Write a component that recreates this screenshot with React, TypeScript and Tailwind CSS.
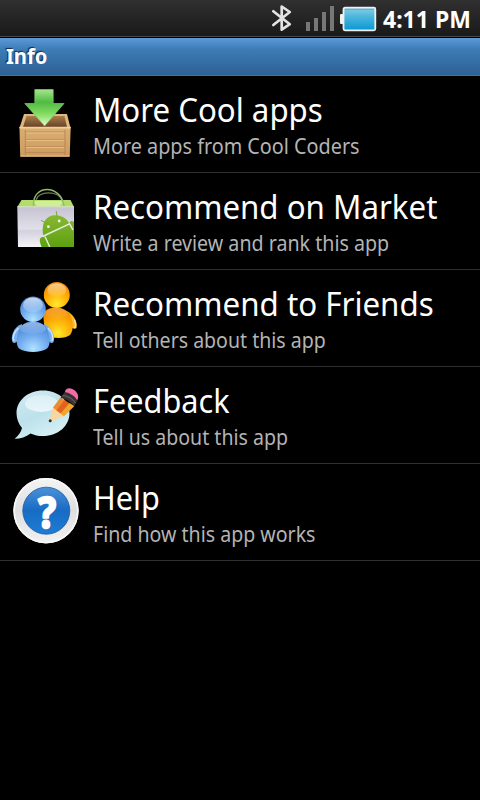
import { ReactNode } from "react";
import clsx from "clsx";

interface InfoItem {
  title: string;
  subtitle: string;
  icon: ReactNode;
  titleScale: string;
  subtitleScale: string;
}

const iconProps = {
  className: "h-24 w-20 shrink-0",
  viewBox: "0 0 80 96",
  fill: "none",
};

function AppsIcon() {
  return (
    <svg {...iconProps}>
      <defs>
        <linearGradient id="crate" x1="0" y1="0" x2="0" y2="1">
          <stop offset="0" stopColor="#dcae72" />
          <stop offset="1" stopColor="#cc9a60" />
        </linearGradient>
        <linearGradient id="inside" x1="0" y1="0" x2="0" y2="1">
          <stop offset="0" stopColor="#a87d4b" />
          <stop offset="1" stopColor="#684323" />
        </linearGradient>
        <linearGradient id="arrow" x1="0" y1="0" x2="0" y2="1">
          <stop offset="0" stopColor="#a5e68f" />
          <stop offset="0.35" stopColor="#4fbb40" />
          <stop offset="0.7" stopColor="#8bdf68" />
          <stop offset="1" stopColor="#e8fccf" />
        </linearGradient>
      </defs>
      <path d="M24 38H67L70.5 52H19.5Z" fill="#deb67e" />
      <path d="M26.5 40H64.5L67 51H23Z" fill="url(#inside)" />
      <path d="M19.5 51H70.7L69.7 80.7H20.2Z" fill="url(#crate)" />
      <path d="M19.5 51.6H70.7" stroke="#f0cf99" strokeWidth="1.6" />
      <path d="M25 56H65M25 63.5H65M25 70.5H65M25 76.5H65" stroke="#b07d49" strokeWidth="0.6" />
      <path d="M25.5 57H64.5M25.5 64.4H64.5M25.5 71.4H64.5" stroke="#e9c48b" strokeWidth="0.9" />
      <path d="M25.3 54V80M65 54V80" stroke="#b07d49" strokeWidth="0.7" />
      <path d="M20.5 80H69.5" stroke="#e7c18b" strokeWidth="1" />
      <path
        d="M34.8 13.5H53.2V27.5H64L44.6 50L24.8 27.5H34.8Z"
        fill="url(#arrow)"
        stroke="#7bcf63"
        strokeWidth="0.7"
      />
    </svg>
  );
}

function MarketIcon() {
  return (
    <svg {...iconProps}>
      <defs>
        <linearGradient id="bag" x1="0" y1="0" x2="0" y2="1">
          <stop offset="0" stopColor="#c5c3d2" />
          <stop offset="0.55" stopColor="#e1dfe9" />
          <stop offset="0.6" stopColor="#d3d1dd" />
          <stop offset="1" stopColor="#f5f4f9" />
        </linearGradient>
        <linearGradient id="droid" x1="0" y1="0" x2="0" y2="1">
          <stop offset="0" stopColor="#87b832" />
          <stop offset="1" stopColor="#5ca010" />
        </linearGradient>
        <clipPath id="bagClip">
          <path d="M17.3 33.5H74V74H18Z" />
        </clipPath>
      </defs>
      <path d="M21.5 27H70.5L74 34H17.3Z" fill="#b4dc6c" />
      <path d="M33 28H64L60 33H37Z" fill="#d1ee97" />
      <path d="M17.3 33.5H74V74H18Z" fill="url(#bag)" />
      <path d="M17.3 33.8H74" stroke="#dde9c6" strokeWidth="0.8" />
      <path d="M36 27C38 18 58 17 62 27" stroke="#698250" strokeWidth="1.2" />
      <path d="M33.5 33C32 11 61 11 64 33" stroke="#96b66c" strokeWidth="1.4" />
      <g clipPath="url(#bagClip)">
        <path
          d="M43.2 62.5C41 50 46 43.8 52.5 42.6C60 41.5 66 44.5 69 50L70.5 48.5C72 47.5 73.5 48.5 75 50V75H42C40 70 39 66.5 40.5 65C41.5 63.8 43 63.8 44.5 64.5Z"
          fill="url(#droid)"
        />
        <path d="M43 63.2L70 50.6" stroke="#e6eedb" strokeWidth="1.6" />
        <path d="M45 63.5L50.2 75M69.3 50.3L73 57" stroke="#e6eedb" strokeWidth="1.4" />
        <path
          d="M41.5 47.5L46 50M56.3 38.5L57 43.5"
          stroke="#78aa2c"
          strokeWidth="1"
          strokeLinecap="round"
        />
      </g>
      <circle cx="48.4" cy="53.7" r="1.4" fill="#eef5e2" />
      <circle cx="59.2" cy="48" r="1.4" fill="#eef5e2" />
    </svg>
  );
}

function FriendsIcon() {
  return (
    <svg {...iconProps}>
      <defs>
        <radialGradient id="orange" cx="0.5" cy="0.85" r="0.85">
          <stop offset="0" stopColor="#ffe92e" />
          <stop offset="0.45" stopColor="#ffb60a" />
          <stop offset="1" stopColor="#f08300" />
        </radialGradient>
        <radialGradient id="blue" cx="0.5" cy="0.9" r="0.85">
          <stop offset="0" stopColor="#b0e3ff" />
          <stop offset="0.5" stopColor="#73adf0" />
          <stop offset="1" stopColor="#4784d5" />
        </radialGradient>
        <linearGradient id="gloss" x1="0" y1="0" x2="0" y2="1">
          <stop offset="0" stopColor="#fff" stopOpacity="0.7" />
          <stop offset="1" stopColor="#fff" stopOpacity="0.1" />
        </linearGradient>
      </defs>
      <path d="M66 41C73 43 78 52 76.5 58C75 60 71 58 69 55Z" fill="#ffb62d" />
      <path d="M74.5 50C76 54 76 57 74 58" stroke="#ffe6a6" strokeWidth="1.3" />
      <path
        d="M43 43C48 35.5 63 35.5 69 43C73.5 50 74 60 70 65C65 69 50 69 45 64Z"
        fill="url(#orange)"
      />
      <path d="M45 43C50 36 63 36 68 43C66 50 49 51 45 43Z" fill="url(#gloss)" opacity="0.3" />
      <circle cx="56.8" cy="25" r="13" fill="url(#orange)" />
      <ellipse cx="56.8" cy="20" rx="9.5" ry="6.8" fill="url(#gloss)" opacity="0.8" />
      <path d="M22 54C14 56 10 67 12.5 72C15 75 19 70 22 65Z" fill="#79afea" />
      <path d="M44 54C51 56 56 67 53.5 72C51 75 47 70 44 65Z" fill="#79afea" />
      <path
        d="M18.5 58C14 62 12.5 67 14 71M48 58C52 62 53.5 67 52 71"
        stroke="#c4e4ff"
        strokeWidth="1.5"
      />
      <path
        d="M20.5 57C25 49.5 41 49.5 46 57C50.5 65 51 75 47 78.5C41 83 25 83 19 78.5C15.5 75 16 65 20.5 57Z"
        fill="url(#blue)"
      />
      <path d="M20 58C25 50 41 50 46 58C48 65 18 66 20 58Z" fill="url(#gloss)" opacity="0.6" />
      <circle cx="33" cy="39.3" r="12.8" fill="url(#blue)" />
      <ellipse cx="33" cy="35" rx="10" ry="7.5" fill="url(#gloss)" />
    </svg>
  );
}

function FeedbackIcon() {
  return (
    <svg {...iconProps}>
      <defs>
        <linearGradient id="bubble" x1="0.2" y1="0" x2="0.7" y2="1">
          <stop offset="0" stopColor="#cfeaf1" />
          <stop offset="0.5" stopColor="#bde1eb" />
          <stop offset="1" stopColor="#d9f1f5" />
        </linearGradient>
        <linearGradient id="shine" x1="0" y1="0" x2="0" y2="1">
          <stop offset="0" stopColor="#d9eff5" />
          <stop offset="1" stopColor="#eaf6fa" />
        </linearGradient>
      </defs>
      <path
        d="M43 23.5C58 23.5 69.5 33.5 69.5 46C69.5 59 58 69 43 69C38.5 69 34 68 30.5 66.4C26 70 20 71.8 14.7 71.7C18.5 68.5 21 65 22 61C18.5 57 16.5 51.5 16.5 46C16.5 33.5 28 23.5 43 23.5Z"
        fill="url(#bubble)"
      />
      <ellipse cx="41.5" cy="36.5" rx="16.5" ry="8.5" fill="url(#shine)" />
      <path d="M49 55L53 40L64 49Z" fill="#f9d5a0" />
      <circle cx="50.2" cy="53.8" r="1.5" fill="#28322f" />
      <path d="M53 40.5L60.5 30.5L65 33.5L57 43.8Z" fill="#ee8a2f" />
      <path d="M56.5 43.5L64.5 33L70 36.5L61 46.8Z" fill="#e2621f" />
      <path d="M60.5 46.8L69.5 36L74.5 39L64 49.2Z" fill="#f0a42a" />
      <path d="M60.5 31L65.5 24C70 24 76 28 77.5 33L74 39.5C71 35 65.5 31.5 60.5 31Z" fill="#383334" />
      <path d="M62.5 28.5C68 29 73 32 75.5 36.2" stroke="#78716d" strokeWidth="0.9" />
      <path
        d="M65 25C65.5 20.5 70.5 20.3 74.5 23.3C78 26 79.2 30 77.2 33.2C75 29 70 26 65 25Z"
        fill="#f46ba6"
      />
    </svg>
  );
}

function HelpIcon() {
  return (
    <svg {...iconProps}>
      <defs>
        <linearGradient id="ring" x1="0" y1="0" x2="0" y2="1">
          <stop offset="0" stopColor="#f4f4f4" />
          <stop offset="0.5" stopColor="#dfdfdf" />
          <stop offset="1" stopColor="#f2f2f2" />
        </linearGradient>
        <linearGradient id="disc" x1="0" y1="0" x2="0" y2="1">
          <stop offset="0" stopColor="#4b91d8" />
          <stop offset="0.5" stopColor="#176bc4" />
          <stop offset="1" stopColor="#1f7dd2" />
        </linearGradient>
      </defs>
      <circle cx="46" cy="46.7" r="32.7" fill="url(#ring)" />
      <circle cx="46" cy="46.7" r="31.8" stroke="#f8f8f8" strokeWidth="1.6" />
      <circle cx="46.3" cy="46.7" r="23.5" fill="url(#disc)" stroke="#155ba8" strokeWidth="0.8" />
      <text
        transform="translate(47 63.6) scale(0.86 1)"
        textAnchor="middle"
        fill="#fff"
        stroke="#fff"
        strokeWidth="2.6"
        strokeLinejoin="round"
        className="font-['Noto_Sans',sans-serif] text-[43px] font-bold"
      >
        ?
      </text>
    </svg>
  );
}

function StatusBar() {
  return (
    <header className="flex h-[38px] items-center border-b border-black bg-linear-to-b from-[#303030] to-[#191919] pl-[270px] shadow-[inset_0_-1px_0_#4b4845]">
      <svg className="h-[38px] w-[110px] shrink-0" viewBox="270 0 110 38" fill="none">
        <defs>
          <linearGradient id="battery" x1="0" y1="0" x2="0" y2="1">
            <stop offset="0" stopColor="#86cee7" />
            <stop offset="0.45" stopColor="#45b3dc" />
            <stop offset="1" stopColor="#0798d3" />
          </linearGradient>
        </defs>
        <path
          d="M273.3 11.3L289.8 24.2L281.7 29.7V6.5L289.8 12L273.3 25"
          stroke="#e3e3e3"
          strokeWidth="2.7"
          strokeLinejoin="round"
          strokeLinecap="round"
        />
        <path
          d="M306 22H310V31H306ZM314 18H318V31H314ZM322 12H326V31H322ZM330 6H334V31H330Z"
          fill="#777"
        />
        <rect x="340" y="14" width="5" height="10" rx="1" fill="#f0f0f0" />
        <rect
          x="343.5"
          y="7.7"
          width="31.8"
          height="22.6"
          rx="1.5"
          fill="url(#battery)"
          stroke="#f0f0f0"
          strokeWidth="1.8"
        />
        <path d="M345 9.3H374" stroke="#6b9dac" strokeWidth="0.8" />
      </svg>
      <span className="ml-[3px] text-[23px] leading-[38px] font-bold whitespace-nowrap text-white">
        4:11 PM
      </span>
    </header>
  );
}

function InfoRow({ title, subtitle, icon, titleScale, subtitleScale }: InfoItem) {
  return (
    <li className="flex h-[97px] border-b border-[#303030]">
      {icon}
      <div className="flex flex-col items-start pt-[13px] pl-[13px] whitespace-nowrap">
        <h2 className={clsx("origin-left text-[33px] leading-[42px] text-white", titleScale)}>
          {title}
        </h2>
        <p className={clsx("origin-left text-[22px] leading-[28px] text-[#b4b4b4]", subtitleScale)}>
          {subtitle}
        </p>
      </div>
    </li>
  );
}

const items: InfoItem[] = [
  {
    title: "More Cool apps",
    subtitle: "More apps from Cool Coders",
    icon: <AppsIcon />,
    titleScale: "scale-x-[0.946]",
    subtitleScale: "scale-x-[0.9]",
  },
  {
    title: "Recommend on Market",
    subtitle: "Write a review and rank this app",
    icon: <MarketIcon />,
    titleScale: "scale-x-[0.947]",
    subtitleScale: "scale-x-[0.893]",
  },
  {
    title: "Recommend to Friends",
    subtitle: "Tell others about this app",
    icon: <FriendsIcon />,
    titleScale: "scale-x-[0.948]",
    subtitleScale: "scale-x-[0.888]",
  },
  {
    title: "Feedback",
    subtitle: "Tell us about this app",
    icon: <FeedbackIcon />,
    titleScale: "scale-x-[0.93]",
    subtitleScale: "scale-x-[0.889]",
  },
  {
    title: "Help",
    subtitle: "Find how this app works",
    icon: <HelpIcon />,
    titleScale: "scale-x-[0.93]",
    subtitleScale: "scale-x-[0.89]",
  },
];

export default function App() {
  return (
    <div className="h-[800px] w-[480px] overflow-hidden bg-black font-['Noto_Sans',sans-serif]">
      <StatusBar />
      <div className="h-[38px] bg-linear-to-b from-[#5a9ad8] via-[#3d7cb6] via-30% to-[#2c6092] pl-[6px] shadow-[inset_0_-1px_0_#4a7194]">
        <h1 className="origin-left scale-x-[0.96] text-[21px] leading-[36px] font-bold text-white [text-shadow:-1px_-1px_1px_#102a42]">
          Info
        </h1>
      </div>
      <ul>
        {items.map((item) => (
          <InfoRow key={item.title} {...item} />
        ))}
      </ul>
    </div>
  );
}
